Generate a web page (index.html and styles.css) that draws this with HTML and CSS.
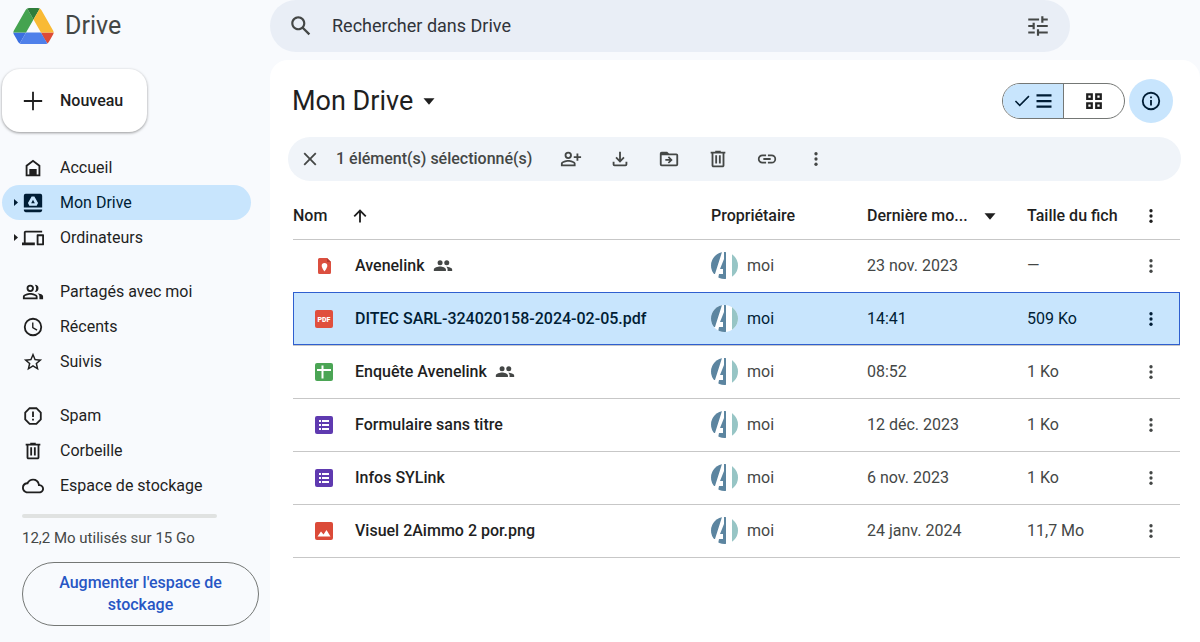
FILE: index.html
```html
<!DOCTYPE html>
<html lang="fr">
<head>
  <meta charset="UTF-8">
  <meta name="viewport" content="width=device-width, initial-scale=1.0">
  <title>Mon Drive</title>
  <link rel="stylesheet" href="styles.css">
</head>
<body>
  <svg class="sprite" aria-hidden="true">
    <symbol id="i-more" viewBox="0 0 24 24"><circle cx="12" cy="5" r="2.200"/><circle cx="12" cy="12" r="2.200"/><circle cx="12" cy="19" r="2.200"/></symbol>
    <symbol id="i-down" viewBox="0 0 24 24"><path d="M6 9h12l-6 7z"/></symbol>
    <symbol id="i-right" viewBox="0 0 9 9"><path d="M3 1l4 3.500-4 3.500z"/></symbol>
    <symbol id="i-trash" viewBox="0 0 24 24"><path d="M15 4V3H9v1H4v2h1v13c0 1.100.9 2 2 2h10c1.100 0 2-.9 2-2V6h1V4h-5zm2 15H7V6h10v13zM9 8h2v9H9zm4 0h2v9h-2z"/></symbol>
    <symbol id="i-people" viewBox="0 0 24 24"><circle cx="8.500" cy="8" r="3"/><circle cx="16.500" cy="8" r="3"/><path d="M1 18v-2c0-2.300 4.700-3.500 7.500-3.500s7 1.200 7 3.500v2zM17.500 18v-2c0-1.300-.6-2.300-1.600-3.100 2.900.2 7.100 1.300 7.100 3.200V18z"/></symbol>
    <symbol id="i-form" viewBox="0 0 20 20"><rect x="1" y="1" width="18" height="18" rx="2" fill="#5f3ab0"/><path fill="#fff" d="M5 5h2v2H5zm0 4h2v2H5zm0 4h2v2H5zm3-8h7v2H8zm0 4h7v2H8zm0 4h7v2H8z"/></symbol>
    <symbol id="i-avatar" viewBox="0 0 27 27">
      <clipPath id="round"><circle cx="13.500" cy="13.500" r="13.500"/></clipPath>
      <g clip-path="url(#round)">
        <path fill="#fff" d="M0 0h27v27H0z"/>
        <path fill="#5c85a0" d="M0 0h11L4 22H0zM13 0h2v27H7l1-5h4v-5H9l4-10z"/>
        <path fill="#97c5c5" d="M21 0h6v27h-6z"/>
      </g>
    </symbol>
  </svg>

  <div class="layout">
    <aside class="sidebar">
      <a class="logo" href="#">
        <svg class="logo-mark" viewBox="0 0 87.300 78">
          <path fill="#3b6fe0" d="M6.600 66.850l3.850 6.650c.8 1.400 1.950 2.500 3.300 3.300l13.750-23.800H0c0 1.550.4 3.100 1.200 4.500z"/>
          <path fill="#45a350" d="M43.650 25L29.900 1.200c-1.350.8-2.500 1.900-3.300 3.300L1.200 48.500A9.060 9.060 0 0 0 0 53h27.500z"/>
          <path fill="#dd4b36" d="M73.550 76.800c1.350-.8 2.500-1.900 3.300-3.300l1.600-2.750 7.650-13.250c.8-1.400 1.200-2.950 1.200-4.500H59.800l5.850 11.500z"/>
          <path fill="#2f7d3b" d="M43.650 25L57.400 1.200C56.050.4 54.500 0 52.900 0H34.400c-1.600 0-3.150.45-4.500 1.200z"/>
          <path fill="#4f80ea" d="M59.800 53H27.500L13.750 76.800c1.350.8 2.900 1.200 4.500 1.200h50.800c1.600 0 3.150-.45 4.500-1.200z"/>
          <path fill="#f9ba35" d="M73.400 26.500L60.700 4.500c-.8-1.400-1.950-2.500-3.300-3.300L43.650 25l16.150 28h27.450c0-1.550-.4-3.100-1.200-4.500z"/>
        </svg>
        <span>Drive</span>
      </a>

      <button class="new-button" type="button">
        <svg class="icon" viewBox="0 0 24 24"><path d="M11 2h2v9h9v2h-9v9h-2v-9H2v-2h9z"/></svg>
        Nouveau
      </button>

      <nav class="nav">
        <div class="nav-group">
          <a class="nav-item" href="#"><span class="caret"></span>
            <svg class="icon" viewBox="0 0 24 24"><path d="M12 3L4 9v12h16V9zm6 16h-2v-6H8v6H6v-9l6-4.500 6 4.500z"/><path d="M9 14h6v6H9z"/></svg>Accueil</a>
          <a class="nav-item active" href="#"><svg class="caret"><use href="#i-right"/></svg>
            <svg class="icon" viewBox="0 0 24 24"><path fill-rule="evenodd" d="M4 2h16a2 2 0 0 1 2 2v13H2V4a2 2 0 0 1 2-2zm6.500 3L6.500 12l1.500 3h8l1.500-3-4-7zM12 8.500l2 3.700h-4zM2 19h20v1a2 2 0 0 1-2 2H4a2 2 0 0 1-2-2z"/></svg>Mon Drive</a>
          <a class="nav-item" href="#"><svg class="caret"><use href="#i-right"/></svg>
            <svg class="icon" viewBox="0 0 24 24"><path d="M4 6h18V4H4c-1.100 0-2 .9-2 2v11H0v3h14v-3H4zm19 2h-6c-.55 0-1 .45-1 1v10c0 .55.45 1 1 1h6c.55 0 1-.45 1-1V9c0-.55-.45-1-1-1zm-1 10h-4v-8h4z"/></svg>Ordinateurs</a>
        </div>
        <div class="nav-group">
          <a class="nav-item" href="#"><span class="caret"></span>
            <svg class="icon" viewBox="0 0 24 24"><path fill-rule="evenodd" d="M9 4a4 4 0 1 1 0 8 4 4 0 0 1 0-8zm0 2a2 2 0 1 0 0 4 2 2 0 0 0 0-4zM1 20v-3c0-2.700 5.300-4 8-4s8 1.300 8 4v3zm2-2h12v-1c0-.8-3.300-2-6-2s-6 1.200-6 2z"/><path d="M14 4a4 4 0 0 1 0 8c2-2.500 2-5.500 0-8zM19 20v-3c0-1.500-.8-2.700-2-3.600 3 .4 6 1.500 6 3.600v3z"/></svg>Partagés avec moi</a>
          <a class="nav-item" href="#"><span class="caret"></span>
            <svg class="icon" viewBox="0 0 24 24"><path d="M12 2a10 10 0 1 0 0 20 10 10 0 0 0 0-20zm0 18a8 8 0 1 1 0-16 8 8 0 0 1 0 16zM12.500 7H11v6l5 3 .8-1.200-4.300-2.600z"/></svg>Récents</a>
          <a class="nav-item" href="#"><span class="caret"></span>
            <svg class="icon" viewBox="0 0 24 24"><path d="M22 9.240l-7.190-.62L12 2 9.190 8.630 2 9.240l5.460 4.730L5.820 21 12 17.270 18.180 21l-1.630-7.030L22 9.240zM12 15.400l-3.760 2.270 1-4.280-3.320-2.880 4.380-.38L12 6.100l1.710 4.040 4.380.38-3.320 2.880 1 4.280z"/></svg>Suivis</a>
        </div>
        <div class="nav-group">
          <a class="nav-item" href="#"><span class="caret"></span>
            <svg class="icon" viewBox="0 0 24 24"><path fill="none" stroke="#1f1f1f" stroke-width="2" d="M8.300 3.500h7.400l4.800 4.800v7.400l-4.800 4.800H8.300l-4.800-4.800V8.300z"/><path d="M11 7h2v6h-2zm0 8h2v2h-2z"/></svg>Spam</a>
          <a class="nav-item" href="#"><span class="caret"></span>
            <svg class="icon"><use href="#i-trash"/></svg>Corbeille</a>
          <a class="nav-item" href="#"><span class="caret"></span>
            <svg class="icon" viewBox="0 0 24 24"><path d="M19.350 10.040A7.490 7.490 0 0 0 12 4C9.110 4 6.600 5.640 5.350 8.040A5.994 5.994 0 0 0 0 14c0 3.310 2.690 6 6 6h13c2.760 0 5-2.240 5-5 0-2.640-2.050-4.780-4.650-4.960zM19 18H6c-2.210 0-4-1.790-4-4s1.790-4 4-4h.71C7.370 7.690 9.480 6 12 6c3.040 0 5.500 2.460 5.500 5.500v.5H19c1.660 0 3 1.340 3 3s-1.340 3-3 3z"/></svg>Espace de stockage</a>
        </div>
      </nav>

      <div class="storage">
        <div class="storage-bar"></div>
        <p class="storage-text">12,2 Mo utilisés sur 15 Go</p>
        <button class="storage-button" type="button">Augmenter l'espace de stockage</button>
      </div>
    </aside>

    <div class="content">
      <form class="search" role="search">
        <button class="icon-button" type="button" aria-label="Rechercher">
          <svg class="icon-large" viewBox="0 0 24 24"><path d="M20.490 19l-5.730-5.730C15.530 12.200 16 10.910 16 9.500 16 5.910 13.090 3 9.500 3S3 5.910 3 9.500 5.910 16 9.500 16c1.410 0 2.700-.47 3.770-1.240L19 20.490 20.490 19zM5 9.500C5 7.010 7.010 5 9.500 5S14 7.010 14 9.500 11.990 14 9.500 14 5 11.990 5 9.500z"/></svg>
        </button>
        <input class="search-input" type="text" placeholder="Rechercher dans Drive" aria-label="Rechercher dans Drive">
        <button class="icon-button" type="button" aria-label="Options de recherche">
          <svg class="icon-large" viewBox="0 0 24 24"><path d="M3 17v2h6v-2H3zM3 5v2h10V5H3zm10 16v-2h8v-2h-8v-2h-2v6h2zM7 9v2H3v2h4v2h2V9H7zm14 4v-2H11v2h10zm-6-4h2V7h4V5h-4V3h-2v6z"/></svg>
        </button>
      </form>

      <main class="panel">
        <div class="title-row">
          <h1 class="title"><button class="title-button" type="button">Mon Drive <svg class="icon"><use href="#i-down"/></svg></button></h1>
          <div class="view-toggle">
            <button class="view on" type="button" aria-label="Liste">
              <svg class="icon-small" viewBox="0 0 24 24"><path d="M9 16.200L4 11.200 2.500 12.700 9 19.200 22 6.200 20.500 4.700z"/></svg>
              <svg class="icon-small" viewBox="0 0 24 24"><path d="M2 3h20v3H2zm0 7.500h20v3H2zM2 18h20v3H2z"/></svg>
            </button>
            <button class="view" type="button" aria-label="Grille">
              <svg class="icon-small" viewBox="0 0 24 24"><path fill="none" stroke="#1f1f1f" stroke-width="3" d="M3 3h6v6H3zm12 0h6v6h-6zM3 15h6v6H3zm12 0h6v6h-6z"/></svg>
            </button>
          </div>
          <button class="info-button" type="button" aria-label="Afficher les détails">
            <svg class="icon" viewBox="0 0 24 24"><path d="M11 7h2v2h-2zm0 4h2v6h-2zm1-9a10 10 0 1 0 0 20 10 10 0 0 0 0-20zm0 18a8 8 0 1 1 0-16 8 8 0 0 1 0 16z"/></svg>
          </button>
        </div>

        <div class="toolbar">
          <button class="icon-button" type="button" aria-label="Effacer la sélection">
            <svg class="icon" viewBox="0 0 24 24"><path d="M19 6.400L17.600 5 12 10.600 6.400 5 5 6.400l5.600 5.600L5 17.600 6.400 19l5.600-5.600 5.600 5.600 1.400-1.400-5.600-5.600z"/></svg>
          </button>
          <span class="toolbar-text">1 élément(s) sélectionné(s)</span>
          <div class="toolbar-actions">
            <button class="icon-button" type="button" aria-label="Partager">
              <svg class="icon" viewBox="0 0 24 24"><path fill-rule="evenodd" d="M9 4a4 4 0 1 1 0 8 4 4 0 0 1 0-8zm0 2a2 2 0 1 0 0 4 2 2 0 0 0 0-4zM1 20v-3c0-2.700 5.300-4 8-4s8 1.300 8 4v3zm2-2h12v-1c0-.8-3.300-2-6-2s-6 1.200-6 2zM18 6h2v3h3v2h-3v3h-2v-3h-3V9h3z"/></svg>
            </button>
            <button class="icon-button" type="button" aria-label="Télécharger">
              <svg class="icon" viewBox="0 0 24 24"><path d="M12 16l-5-5 1.400-1.400 2.600 2.600V4h2v8.200l2.600-2.600L17 11zM4 15h2v3h12v-3h2v3a2 2 0 0 1-2 2H6a2 2 0 0 1-2-2z"/></svg>
            </button>
            <button class="icon-button" type="button" aria-label="Déplacer">
              <svg class="icon" viewBox="0 0 24 24"><path fill-rule="evenodd" d="M4 4h6l2 2h8a2 2 0 0 1 2 2v10a2 2 0 0 1-2 2H4a2 2 0 0 1-2-2V6a2 2 0 0 1 2-2zm0 4v10h16V8z"/><path d="M12 9l4 4-4 4-1.300-1.300L12.400 14H8v-2h4.400l-1.700-1.700z"/></svg>
            </button>
            <button class="icon-button" type="button" aria-label="Supprimer"><svg class="icon"><use href="#i-trash"/></svg></button>
            <button class="icon-button" type="button" aria-label="Copier le lien">
              <svg class="icon" viewBox="0 0 24 24"><path d="M3.900 12c0-1.710 1.390-3.100 3.100-3.100h4V7H7a5 5 0 0 0 0 10h4v-1.900H7c-1.710 0-3.100-1.390-3.100-3.100zM8 13h8v-2H8zm9-6h-4v1.900h4a3.100 3.100 0 0 1 0 6.200h-4V17h4a5 5 0 0 0 0-10z"/></svg>
            </button>
            <button class="icon-button" type="button" aria-label="Autres actions"><svg class="icon-small"><use href="#i-more"/></svg></button>
          </div>
        </div>

        <table class="files">
          <thead>
            <tr>
              <th class="col-name"><div class="cell">Nom <svg class="icon sort" viewBox="0 0 24 24"><path d="M11 19V8.400l-4.600 4.600L5 11.600l7-7 7 7-1.400 1.400L13 8.400V19z"/></svg></div></th>
              <th class="col-owner">Propriétaire</th>
              <th class="col-date"><div class="cell">Dernière mo... <svg class="icon"><use href="#i-down"/></svg></div></th>
              <th class="col-size">Taille du fich</th>
              <th class="col-menu"><button class="icon-button" type="button" aria-label="Options"><svg class="icon-small"><use href="#i-more"/></svg></button></th>
            </tr>
          </thead>
          <tbody>
            <tr>
              <td class="name"><div class="cell"><svg class="file-icon" viewBox="0 0 20 20"><path fill="#db4f3f" d="M5.500 2H13l4 4v10.500a1.500 1.500 0 0 1-1.500 1.500h-10A1.500 1.500 0 0 1 4 16.500v-13A1.500 1.500 0 0 1 5.500 2z"/><path fill="#b93a30" d="M13 2l4 4h-4z"/><path fill="#fff" d="M10.500 7a2.800 2.800 0 0 1 2.800 2.800c0 2.200-2.800 5.700-2.800 5.700s-2.800-3.500-2.800-5.700A2.800 2.800 0 0 1 10.500 7z"/></svg>Avenelink<svg class="shared"><use href="#i-people"/></svg></div></td>
              <td><div class="cell owner"><svg class="avatar"><use href="#i-avatar"/></svg>moi</div></td>
              <td>23 nov. 2023</td>
              <td>—</td>
              <td class="menu"><button class="icon-button" type="button" aria-label="Actions"><svg class="icon-small"><use href="#i-more"/></svg></button></td>
            </tr>
            <tr class="selected">
              <td class="name"><div class="cell"><svg class="file-icon" viewBox="0 0 20 20"><rect x="1" y="1" width="18" height="18" rx="2" fill="#e04f3d"/><text class="pdf-label" x="10" y="13">PDF</text></svg>DITEC SARL-324020158-2024-02-05.pdf</div></td>
              <td><div class="cell owner"><svg class="avatar"><use href="#i-avatar"/></svg>moi</div></td>
              <td>14:41</td>
              <td>509 Ko</td>
              <td class="menu"><button class="icon-button" type="button" aria-label="Actions"><svg class="icon-small"><use href="#i-more"/></svg></button></td>
            </tr>
            <tr>
              <td class="name"><div class="cell"><svg class="file-icon" viewBox="0 0 20 20"><rect x="1" y="1" width="18" height="18" rx="2" fill="#4ba555"/><path fill="#fff" d="M7.500 3.500h2V7H17v2H9.500v7.500h-2V9H3V7h4.500z"/></svg>Enquête Avenelink<svg class="shared"><use href="#i-people"/></svg></div></td>
              <td><div class="cell owner"><svg class="avatar"><use href="#i-avatar"/></svg>moi</div></td>
              <td>08:52</td>
              <td>1 Ko</td>
              <td class="menu"><button class="icon-button" type="button" aria-label="Actions"><svg class="icon-small"><use href="#i-more"/></svg></button></td>
            </tr>
            <tr>
              <td class="name"><div class="cell"><svg class="file-icon"><use href="#i-form"/></svg>Formulaire sans titre</div></td>
              <td><div class="cell owner"><svg class="avatar"><use href="#i-avatar"/></svg>moi</div></td>
              <td>12 déc. 2023</td>
              <td>1 Ko</td>
              <td class="menu"><button class="icon-button" type="button" aria-label="Actions"><svg class="icon-small"><use href="#i-more"/></svg></button></td>
            </tr>
            <tr>
              <td class="name"><div class="cell"><svg class="file-icon"><use href="#i-form"/></svg>Infos SYLink</div></td>
              <td><div class="cell owner"><svg class="avatar"><use href="#i-avatar"/></svg>moi</div></td>
              <td>6 nov. 2023</td>
              <td>1 Ko</td>
              <td class="menu"><button class="icon-button" type="button" aria-label="Actions"><svg class="icon-small"><use href="#i-more"/></svg></button></td>
            </tr>
            <tr>
              <td class="name"><div class="cell"><svg class="file-icon" viewBox="0 0 20 20"><rect x="1" y="1" width="18" height="18" rx="2" fill="#db4a38"/><path fill="#fff" d="M3.500 15.500l3.500-5 2.500 3 3-4.500 4 6.500z"/></svg>Visuel 2Aimmo 2 por.png</div></td>
              <td><div class="cell owner"><svg class="avatar"><use href="#i-avatar"/></svg>moi</div></td>
              <td>24 janv. 2024</td>
              <td>11,7 Mo</td>
              <td class="menu"><button class="icon-button" type="button" aria-label="Actions"><svg class="icon-small"><use href="#i-more"/></svg></button></td>
            </tr>
          </tbody>
        </table>
      </main>
    </div>
  </div>
</body>
</html>
```
FILE: styles.css
```css
* {
  box-sizing: border-box;
}
body {
  margin: 0;
  background: #f8fafd;
  color: #1f1f1f;
  font-family: Roboto, "Liberation Sans", sans-serif;
  font-size: 16px;
  line-height: 22px;
}
a {
  color: inherit;
  text-decoration: none;
}
button {
  font: inherit;
  color: inherit;
  background: none;
  border: 0;
  padding: 0;
  cursor: pointer;
}
svg {
  display: block;
  flex: none;
  fill: currentColor;
}
.sprite {
  position: absolute;
  width: 0;
  height: 0;
}
.icon {
  width: 22px;
  height: 22px;
}
.icon-small {
  width: 18px;
  height: 18px;
}
.icon-large {
  width: 26px;
  height: 26px;
}
.icon-button {
  display: flex;
  align-items: center;
  justify-content: center;
}
.layout {
  display: flex;
  min-height: 100vh;
}

/* Sidebar */
.sidebar {
  width: 270px;
  flex: none;
}
.logo {
  display: flex;
  align-items: center;
  gap: 11px;
  height: 52px;
  padding-left: 13px;
  color: #444746;
  font-size: 25px;
}
.logo-mark {
  width: 41px;
  height: 36px;
}
.new-button {
  display: flex;
  align-items: center;
  gap: 16px;
  height: 63px;
  margin: 17px 0 18px 2px;
  padding: 0 24px 0 20px;
  border-radius: 18px;
  background: #fff;
  box-shadow: 0 1px 3px rgba(0, 0, 0, 0.4);
  font-weight: 500;
}
.nav {
  display: flex;
  flex-direction: column;
  gap: 19px;
}
.nav-item {
  display: flex;
  align-items: center;
  height: 35px;
  margin: 0 19px 0 2px;
  padding-left: 9px;
  border-radius: 18px;
}
.nav-item .icon {
  margin: 0 16px 0 2px;
}
.active {
  background: #c8e5fd;
  color: #001d35;
}
.caret {
  width: 9px;
  height: 9px;
}
.storage {
  padding: 11px 11px 0 22px;
}
.storage-bar {
  height: 4px;
  margin-right: 42px;
  border-radius: 2px;
  background: #e0e2e1;
}
.storage-text {
  margin: 9px 0 13px;
  color: #444746;
  font-size: 15px;
}
.storage-button {
  width: 100%;
  padding: 9px 28px;
  border: 1px solid #747775;
  border-radius: 32px;
  color: #2756c4;
  font-weight: 500;
  line-height: 22px;
}

/* Search and file list */
.content {
  display: flex;
  flex-direction: column;
  flex: 1;
  min-width: 0;
}
.search {
  display: flex;
  align-items: center;
  gap: 18px;
  height: 52px;
  margin: 0 130px 8px 0;
  padding: 0 19px 0 18px;
  border-radius: 26px;
  background: #e9eef6;
  color: #444746;
}
.search-input {
  flex: 1;
  min-width: 0;
  border: 0;
  padding: 0;
  outline: 0;
  background: none;
  font: inherit;
  font-size: 18px;
}
.search-input::placeholder {
  color: #30343a;
  opacity: 1;
}
.panel {
  flex: 1;
  padding: 19px 19px 0 18px;
  border-radius: 18px 18px 0 0;
  background: #fff;
}
.title-row {
  display: flex;
  align-items: center;
  height: 44px;
  padding: 0 8px 0 4px;
}
.title {
  flex: 1;
  margin: 0;
  font-size: 27px;
  font-weight: 400;
}
.title-button {
  display: flex;
  align-items: center;
  gap: 5px;
}
.view-toggle {
  display: flex;
  width: 123px;
  height: 36px;
  margin-right: 4px;
  border: 1px solid #747775;
  border-radius: 18px;
  overflow: hidden;
}
.view {
  display: flex;
  flex: 1;
  align-items: center;
  justify-content: center;
  gap: 4px;
}
.view.on {
  border-right: 1px solid #747775;
  background: #c8e5fd;
  color: #001d35;
}
.info-button {
  display: flex;
  align-items: center;
  justify-content: center;
  width: 44px;
  height: 44px;
  border-radius: 50%;
  background: #c8e5fd;
  color: #001d35;
}
.toolbar {
  display: flex;
  align-items: center;
  height: 44px;
  margin: 14px 0 12px;
  padding-left: 11px;
  border-radius: 22px;
  background: #f0f4f9;
  color: #444746;
}
.toolbar-text {
  margin: 0 28px 0 15px;
  font-weight: 500;
}
.toolbar-actions {
  display: flex;
  gap: 27px;
}
.toolbar-actions .icon-button {
  width: 22px;
}
.files {
  width: calc(100% - 6px);
  margin-left: 5px;
  border-collapse: collapse;
  table-layout: fixed;
}
.files th {
  height: 46px;
  padding: 0;
  border-bottom: 1px solid #c7c7c7;
  font-weight: 500;
  text-align: left;
  white-space: nowrap;
}
.files td {
  height: 53px;
  padding: 0;
  border-bottom: 1px solid #c7c7c7;
  color: #444746;
}
.col-owner {
  width: 156px;
}
.col-date {
  width: 160px;
}
.col-size {
  width: 115px;
}
.col-menu {
  width: 38px;
}
.cell {
  display: flex;
  align-items: center;
}
.sort {
  margin-left: 22px;
}
.col-date .icon {
  margin-left: 11px;
}
.files .name {
  padding-left: 21px;
  color: #1f1f1f;
  font-weight: 500;
}
.file-icon {
  width: 20px;
  height: 20px;
  margin-right: 21px;
}
.pdf-label {
  fill: #fff;
  font-size: 7px;
  font-weight: 900;
  text-anchor: middle;
}
.shared {
  width: 20px;
  height: 20px;
  margin-left: 8px;
  color: #444746;
}
.avatar {
  width: 27px;
  height: 27px;
}
.owner {
  gap: 9px;
}
.menu {
  color: #1f1f1f;
}
.selected {
  outline: 1px solid #2f5fcf;
  outline-offset: -1px;
  background: #c8e5fd;
}
.files .selected td {
  color: #001d35;
}
```
